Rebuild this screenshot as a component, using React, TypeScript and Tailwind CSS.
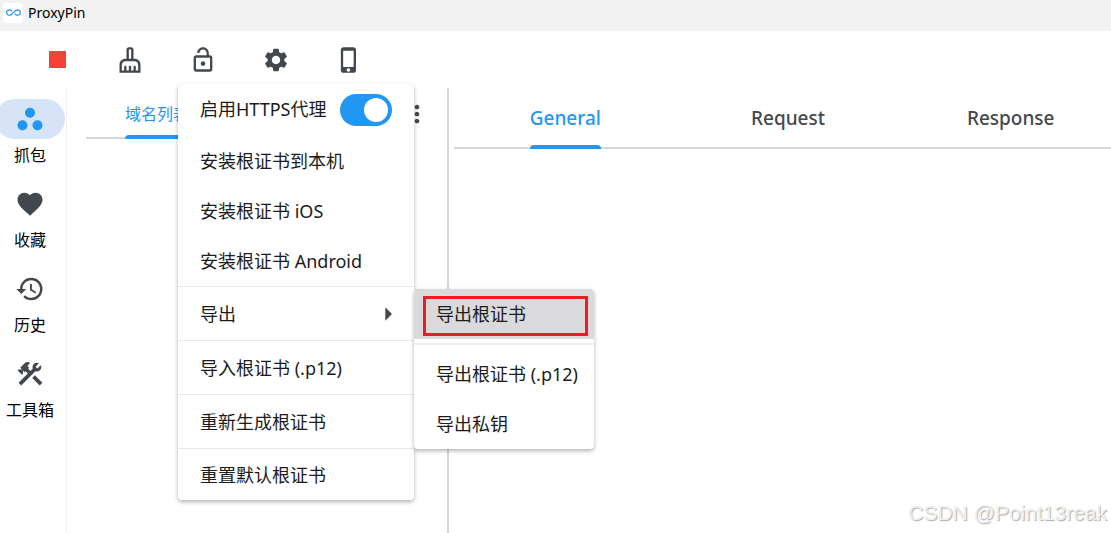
import { useState } from 'react';
import type { ReactNode } from 'react';
import type { IconType } from 'react-icons';
import {
  MdAllInclusive,
  MdArrowRight,
  MdConstruction,
  MdFavorite,
  MdHistory,
  MdLockOpen,
  MdMoreVert,
  MdOutlineCleaningServices,
  MdPhoneIphone,
  MdSettings,
  MdWorkspaces,
} from 'react-icons/md';

const navItems: { label: string; icon: IconType }[] = [
  { label: '抓包', icon: MdWorkspaces },
  { label: '收藏', icon: MdFavorite },
  { label: '历史', icon: MdHistory },
  { label: '工具箱', icon: MdConstruction },
];

const detailTabs = ['General', 'Request', 'Response'];

function ToolButton({ label, children }: { label: string; children: ReactNode }) {
  return (
    <button aria-label={label} className="flex size-10 items-center justify-center text-[28px]">
      {children}
    </button>
  );
}

function MenuItem({ children, className = 'h-[50px]' }: { children: ReactNode; className?: string }) {
  return (
    <button
      role="menuitem"
      className={`flex w-full items-center px-[22px] pt-[2px] text-left whitespace-nowrap ${className}`}
    >
      {children}
    </button>
  );
}

function ExportMenu() {
  return (
    <div
      role="menu"
      className="absolute top-[2px] left-full z-20 w-[180px] rounded bg-white shadow-[0_2px_4px_rgba(0,0,0,0.3)]"
    >
      <div className="relative rounded-t bg-[#dadadc]">
        <MenuItem>导出根证书</MenuItem>
        <span className="pointer-events-none absolute top-[7px] right-[6px] bottom-[3px] left-[9px] border-3 border-[#ed1c24]" />
      </div>
      <div className="mt-1 border-t-2 border-[#efeff1]" />
      <div className="pt-1">
        <MenuItem>导出根证书 (.p12)</MenuItem>
        <MenuItem>导出私钥</MenuItem>
      </div>
    </div>
  );
}

function HttpsMenu() {
  const [enabled, setEnabled] = useState(true);

  return (
    <div
      role="menu"
      className="absolute top-[44px] left-[-5px] z-10 w-[236px] rounded bg-white text-[18px] text-[#1a1c20] shadow-[0_2px_4px_rgba(0,0,0,0.3)]"
    >
      <label className="flex h-[52px] items-center justify-between px-[22px]">
        启用HTTPS代理
        <input
          type="checkbox"
          role="switch"
          checked={enabled}
          onChange={(e) => setEnabled(e.target.checked)}
          className="peer sr-only"
        />
        <span className="flex h-8 w-[52px] items-center rounded-full bg-gray-300 px-1 peer-checked:justify-end peer-checked:bg-[#2196f3]">
          <span className="size-6 rounded-full bg-white" />
        </span>
      </label>
      <MenuItem>安装根证书到本机</MenuItem>
      <MenuItem>安装根证书 iOS</MenuItem>
      <MenuItem>安装根证书 Android</MenuItem>
      <div className="relative border-t border-[#e8e8ea]">
        <MenuItem className="h-[53px] justify-between">
          导出
          <MdArrowRight className="-mr-[12px] text-[32px] text-[#43474e]" />
        </MenuItem>
        <ExportMenu />
      </div>
      <div className="border-t border-[#e8e8ea]">
        <MenuItem className="h-[53px]">导入根证书 (.p12)</MenuItem>
      </div>
      <div className="border-t border-[#e8e8ea]">
        <MenuItem className="h-[53px]">重新生成根证书</MenuItem>
      </div>
      <div className="border-t border-[#e8e8ea]">
        <MenuItem className="h-[51px]">重置默认根证书</MenuItem>
      </div>
    </div>
  );
}

function Toolbar() {
  return (
    <header className="flex h-[57px] shrink-0 items-center gap-[33px] pl-[37px] text-[#43474e]">
      <ToolButton label="停止">
        <span className="size-[17px] bg-[#f44336]" />
      </ToolButton>
      <ToolButton label="清除">
        <MdOutlineCleaningServices />
      </ToolButton>
      <div className="relative">
        <ToolButton label="HTTPS代理">
          <MdLockOpen />
        </ToolButton>
        <HttpsMenu />
      </div>
      <ToolButton label="设置">
        <MdSettings />
      </ToolButton>
      <ToolButton label="手机连接">
        <MdPhoneIphone />
      </ToolButton>
    </header>
  );
}

function SideNav() {
  const [active, setActive] = useState('抓包');

  return (
    <nav className="w-[67px] shrink-0 border-r border-[#efeff1] pt-[11px]">
      <div className="flex w-[60px] flex-col items-center gap-[17px]">
        {navItems.map(({ label, icon: Icon }) => (
          <button key={label} onClick={() => setActive(label)} className="flex flex-col items-center gap-1 text-black">
            <span
              className={`flex h-10 w-[70px] items-center justify-center rounded-full text-[30px] ${
                active === label ? 'bg-[#d7e3f7] text-[#2196f3]' : 'text-[#43474e]'
              }`}
            >
              <Icon />
            </span>
            <span className="text-base leading-6">{label}</span>
          </button>
        ))}
      </div>
    </nav>
  );
}

function DomainPanel() {
  return (
    <section className="flex w-[380px] shrink-0 items-start pr-4 pl-[19px]">
      <div role="tablist" className="flex h-[51px] flex-1 border-b-2 border-[#d5d7de] px-[39px]">
        <button
          role="tab"
          aria-selected
          className="relative -mb-[2px] text-base text-[#2196f3]"
        >
          域名列表
          <span className="absolute inset-x-0 bottom-0 h-1 rounded-t bg-[#2196f3]" />
        </button>
      </div>
      <button aria-label="更多" className="mt-3 ml-1 flex w-7 justify-center text-[28px] text-[#43474e]">
        <MdMoreVert />
      </button>
    </section>
  );
}

function DetailPanel() {
  const [active, setActive] = useState('General');

  return (
    <main className="min-w-0 flex-1 overflow-hidden border-l-2 border-[#d5d7de] pl-[5px]">
      <div role="tablist" className="-mr-[11px] flex h-[61px] border-b-2 border-[#d5d7de]">
        {detailTabs.map((tab) => (
          <div key={tab} className="-mb-[2px] flex flex-1 justify-center">
            <button
              role="tab"
              aria-selected={active === tab}
              onClick={() => setActive(tab)}
              className={`relative text-[19px] font-medium ${active === tab ? 'text-[#2196f3]' : 'text-[#43474e]'}`}
            >
              {tab}
              {active === tab && <span className="absolute inset-x-0 bottom-0 h-1 rounded-t bg-[#2196f3]" />}
            </button>
          </div>
        ))}
      </div>
    </main>
  );
}

export default function App() {
  return (
    <div className="relative flex min-h-screen flex-col overflow-hidden bg-white font-['Noto_Sans','Noto_Sans_CJK_SC',sans-serif]">
      <div className="flex h-[31px] shrink-0 items-center gap-[5px] bg-[#f2f2f2] px-[3px] pb-[6px] text-[14px] text-black">
        <span className="flex size-5 items-center justify-center rounded bg-white text-[15px] text-[#2196f3]">
          <MdAllInclusive />
        </span>
        ProxyPin
      </div>
      <Toolbar />
      <div className="flex flex-1">
        <SideNav />
        <DomainPanel />
        <DetailPanel />
      </div>
      <p className="absolute right-1 bottom-1 font-['Liberation_Sans',sans-serif] text-[21px] leading-8 text-[#f0f0f0] [text-shadow:1px_1px_1px_#aaa]">
        CSDN @Point13reak
      </p>
    </div>
  );
}
